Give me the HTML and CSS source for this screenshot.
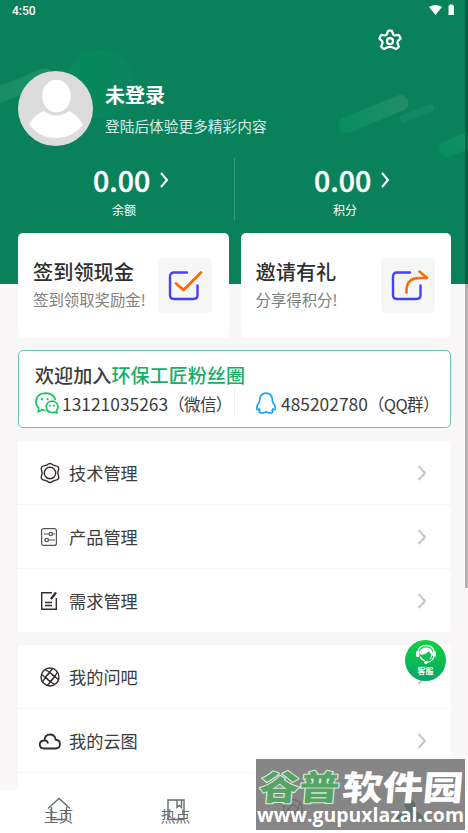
FILE: index.html
```html
<!DOCTYPE html>
<html lang="zh-CN">
<head>
<meta charset="utf-8">
<title>我的</title>
<link rel="stylesheet" href="styles.css">
</head>
<body>
<div class="screen">
  <main class="content">
    <header class="header">
      <svg class="decor" width="468" height="284" viewBox="0 0 468 284">
        <defs>
          <linearGradient id="g1"><stop offset="0" stop-color="#078f60"/><stop offset="1" stop-color="#238c69"/></linearGradient>
          <linearGradient id="g2"><stop offset="0" stop-color="#068a5b"/><stop offset="1" stop-color="#0a845e"/></linearGradient>
        </defs>
        <circle cx="100" cy="84" r="34" fill="url(#g2)"/>
        <rect x="-58" y="-8" width="116" height="16" rx="8" transform="translate(-1 95) rotate(-22)" fill="url(#g1)"/>
        <rect x="-37" y="-8" width="74" height="16" rx="8" transform="translate(373.500 114) rotate(-22)" fill="url(#g1)"/>
        <rect x="-18" y="-4" width="36" height="8" rx="4" transform="translate(417 113.500) rotate(-22)" fill="#128963"/>
        <rect x="-37" y="-8" width="74" height="16" rx="8" transform="translate(474 138) rotate(-22)" fill="url(#g1)"/>
      </svg>
      <div class="status">
        <span>4:50</span>
        <svg width="28" height="13" viewBox="0 0 28 13" fill="#fff"><path d="M0 3Q6.500-1.200 13 3L6.500 11Z"/><path d="M19.500 1.500h1.200V.5h3v1h1.200v9.500h-5.400z"/></svg>
      </div>
      <div class="settings">
        <svg width="26" height="26" viewBox="0 0 26 26" fill="none" stroke="#fff" stroke-width="2.200" stroke-linejoin="round"><path d="M11 2.900q2-.6 4 0l1.200 3.700 1.600.9 3.900-.6q1.500 1.600 1.900 3.500l-2.900 2.900-.3 1.700 1.500 3.700q-1.300 1.700-3 2.300L15.300 19.300q-2.300-1-4.600 0L7.100 21q-1.700-.6-3-2.300L5.600 15l-.3-1.700-2.900-2.900q.4-1.900 1.900-3.500l3.900.6 1.600-.9z"/><circle cx="13" cy="13.200" r="3"/></svg>
      </div>
      <div class="profile">
        <svg width="75" height="75" viewBox="0 0 75 75"><circle cx="37.500" cy="37.500" r="37.500" fill="#dcdcdc"/><ellipse cx="38.500" cy="25" rx="14.300" ry="16.200" fill="#fff"/><path d="M26 40Q38 49 51 40Q60 44 65 54Q54 67 38 67Q21 67 11 53Q17 43 26 40Z" fill="#fff"/></svg>
        <div class="who"><div class="name">未登录</div><div class="hint">登陆后体验更多精彩内容</div></div>
      </div>
      <div class="stats">
        <div class="stat"><div class="num">0.00<svg width="9" height="16" viewBox="0 0 9 16"><path d="M1.500 1.500L7 8l-5.500 6.500" fill="none" stroke="#fff" stroke-width="2" stroke-linecap="round"/></svg></div><div class="label">余额</div></div>
        <div class="stat"><div class="num">0.00<svg width="9" height="16" viewBox="0 0 9 16"><path d="M1.500 1.500L7 8l-5.500 6.500" fill="none" stroke="#fff" stroke-width="2" stroke-linecap="round"/></svg></div><div class="label">积分</div></div>
      </div>
    </header>

    <section class="promos">
      <div class="promo"><div><div class="title">签到领现金</div><div class="desc">签到领取奖励金!</div></div>
        <div class="tile"><svg width="54" height="54" viewBox="0 0 54 54" fill="none" stroke-linecap="round" stroke-linejoin="round"><path d="M29 14.500H16q-4 0-4 4V37q0 4 4 4h19.500q4 0 4-4V27.500" stroke="#4540ff" stroke-width="2.400"/><path d="M18 25.500l7.500 6.500L43 14.500" stroke="#ff6a00" stroke-width="2.700"/></svg></div></div>
      <div class="promo"><div><div class="title">邀请有礼</div><div class="desc">分享得积分!</div></div>
        <div class="tile"><svg width="54" height="54" viewBox="0 0 54 54" fill="none" stroke-linecap="round" stroke-linejoin="round"><path d="M29 14.500H16q-4 0-4 4V37q0 4 4 4h19.500q4 0 4-4V27.500" stroke="#4540ff" stroke-width="2.400"/><path d="M25.500 34.500v-2q0-12.500 13-12.500H46l-7.500-6.500" stroke="#ff6a00" stroke-width="2.500"/></svg></div></div>
    </section>

    <section class="fans">
      <div class="join">欢迎加入<span>环保工匠粉丝圈</span></div>
      <div class="contacts">
        <div class="contact wechat">
          <svg width="24" height="22" viewBox="0 0 24 22" fill="none" stroke="#1cc45a" stroke-width="1.700"><path d="M10.500 18.300q-2 0-3.500-.6L3.300 19.800l.4-3.800Q.9 13.500.9 9.600 1.500 1.500 10.500 1.100q8.500.3 9.800 7"/><path d="M21.900 20.900l-.4-2.500q1.700-1.800 1.500-4Q22 9.200 17 9q-5.600.5-5.800 5.800.5 5.300 6 5.700 1.200 0 2.200-.4z"/><path d="M7 6.200v2M12.500 6.200v2M14.800 12.800v1.700M19 12.800v1.700" stroke-width="1.900"/></svg>
          <span>13121035263<span class="note">（微信）</span></span>
        </div>
        <div class="contact qq">
          <svg width="20" height="22" viewBox="0 0 20 22" fill="none" stroke="#20a5ee" stroke-width="1.700" stroke-linejoin="round"><path d="M3.600 8.500Q4 1.200 10 1.200t6.400 7.300q0 1.500.8 2.500 2.400 3 2 6-.8 1.600-2.400-.2l-.8 1.700q1.500 1.300.2 2.100-3.200.8-6.200-.8-3 1.600-6.200.8-1.300-.8.200-2.100l-.8-1.700q-1.600 1.800-2.400.2-.4-3 2-6 .8-1 .8-2.500z"/></svg>
          <span>485202780<span class="note">（QQ群）</span></span>
        </div>
      </div>
    </section>

    <section class="list">
      <div class="row"><svg class="ico" width="22" height="22" viewBox="0 0 22 22"><path d="M8.300 2.800Q11 .2 13.700 2.800l3.300 1.100q3.300.5 2.600 3.800L18.800 11l.8 3.300q.7 3.300-2.600 3.800l-3.300 1.100q-2.700 2.600-5.400 0L5 18.100q-3.300-.5-2.600-3.800L3.200 11l-.8-3.300Q1.700 4.400 5 3.900z"/><circle cx="11" cy="11" r="5.700"/></svg><span>技术管理</span><svg class="arrow" width="10" height="16" viewBox="0 0 10 16"><path d="M1.500 1L8 8l-6.500 7"/></svg></div>
      <div class="row"><svg class="ico thin" width="22" height="22" viewBox="0 0 22 22"><rect x="2.600" y="2.600" width="14.800" height="16.800" rx="2"/><path d="M5 8h5m3.500 0H16M5 14h1m3.500 0H16"/><circle cx="11.800" cy="8" r="1.700"/><circle cx="7.800" cy="14" r="1.700"/></svg><span>产品管理</span><svg class="arrow" width="10" height="16" viewBox="0 0 10 16"><path d="M1.500 1L8 8l-6.500 7"/></svg></div>
      <div class="row"><svg class="ico" width="22" height="22" viewBox="0 0 22 22"><path d="M13 2.800H2.700v16.500h14.600V8M6 12.500h7M6 15.500h7"/><path d="M12 9l5-6.500" stroke-width="2.300"/></svg><span>需求管理</span><svg class="arrow" width="10" height="16" viewBox="0 0 10 16"><path d="M1.500 1L8 8l-6.500 7"/></svg></div>
    </section>

    <section class="list">
      <div class="row"><svg class="ico" width="22" height="22" viewBox="0 0 22 22"><circle cx="11" cy="11" r="9"/><path d="M11 6.500l4.500 4.500-4.500 4.500L6.500 11zM11 6.500L6 3.500M15.500 11l3-5M11 15.500l5 3M6.500 11l-3 5M6.500 11l7-8.300M11 6.500l8.300 7M15.500 11l-7 8.300M11 15.500L2.700 8.500"/></svg><span>我的问吧</span><svg class="arrow" width="10" height="16" viewBox="0 0 10 16"><path d="M1.500 1L8 8l-6.500 7"/></svg></div>
      <div class="row"><svg class="ico cloud" width="22" height="22" viewBox="0 0 22 22"><path d="M5 18.500q-4.200-.2-4.200-4 0-3.700 4.500-4Q6 4.500 11 4.500q5 0 5.500 5 4.500.7 4.500 4.500 0 4.500-4.500 4.500zM5.300 10.500q3.200-.4 3.700 3"/></svg><span>我的云图</span><svg class="arrow" width="10" height="16" viewBox="0 0 10 16"><path d="M1.500 1L8 8l-6.500 7"/></svg></div>
      <div class="row"></div>
    </section>
  </main>

  <nav class="tabs">
    <div class="tab"><svg width="26" height="26" viewBox="0 0 26 26"><path d="M2 12.500L13 2.500l11 10M5.500 11v12.500h15V11"/></svg><span>主页</span></div>
    <div class="tab"><svg width="26" height="26" viewBox="0 0 26 26"><path d="M5 4h16v19.500H5zM14 4v7.500l2.200-2 2.300 2V4"/></svg><span>热点</span></div>
    <div class="tab"><svg width="26" height="26" viewBox="0 0 26 26"><circle cx="13" cy="13" r="9.500"/><path d="M13 8l5 5-5 5-5-5zM13 8L7 6M18 13l2-7M13 18l6 2M8 13l-2 7"/></svg></div>
    <div class="tab active"><svg width="30" height="26" viewBox="0 0 30 26"><circle cx="15" cy="9" r="5.500"/><path d="M1 24q1-8 14-11 13 3 14 11z"/></svg></div>
  </nav>

  <div class="service">
    <svg width="22" height="21" viewBox="0 0 22 21"><path d="M3 8Q4 1.500 11 1.500T19 8" fill="none" stroke="#fff" stroke-width="1.300"/><path d="M4.500 9Q5 3.500 11 3.500t6.500 5q.5 5.500-3.500 7.500 2.500-3 1.700-7l-2.200-1.500Q10 11.500 5.500 10.500z" fill="#fff"/><rect x="1" y="7" width="3.500" height="6" rx="1.500" fill="#fff"/><rect x="17.500" y="7" width="3.500" height="6" rx="1.500" fill="#fff"/><path d="M5 12.500q1.500 3.500 5 4M19 12q-1 6-8 6.500" fill="none" stroke="#fff" stroke-width="1.300"/><circle cx="11" cy="18.500" r="1.800" fill="#fff"/></svg>
    <span>客服</span>
  </div>

  <svg class="watermark" width="209" height="71" viewBox="0 0 209 71">
    <rect width="209" height="71" fill="#6d6d6d" fill-opacity=".83"/>
    <g class="brand" transform="skewX(-5)">
      <text class="brand-green" x="6" y="41" textLength="80" lengthAdjust="spacingAndGlyphs">谷普</text>
      <text class="brand-white" x="89" y="41" textLength="121" lengthAdjust="spacingAndGlyphs">软件园</text>
    </g>
    <text class="site" x="1" y="63" textLength="207" lengthAdjust="spacingAndGlyphs">www.gupuxlazal.com</text>
  </svg>
  <div class="scrollbar"></div>
</div>
</body>
</html>
```
FILE: styles.css
```css
* { box-sizing: border-box; }
body { margin: 0; font-family: "Noto Sans CJK SC", sans-serif; color: #3c3c3c; }
svg { display: block; flex: none; }
.screen { position: relative; width: 468px; height: 833px; overflow: hidden; background: #f8f6f7; display: flex; flex-direction: column; }
.content { height: 790px; overflow: hidden; flex: none; }
.header { position: relative; height: 284px; background: #09825b; color: #fff; }
.decor { position: absolute; inset: 0; }
.status, .settings, .profile, .stats { position: relative; }
.status { height: 20px; padding: 4px 11px 0 12px; display: flex; justify-content: space-between; font: 500 12px/14px Roboto, sans-serif; }
.settings { height: 51px; padding: 8px 0 0 377px; }
.profile { display: flex; padding-left: 18px; height: 75px; }
.who { margin-left: 12px; padding-top: 10px; }
.name { font-size: 20px; line-height: 28px; font-weight: 700; }
.hint { font-size: 14.700px; line-height: 20px; margin-top: 7px; color: #d8ece5; }
.stats { display: flex; margin-top: 12px; height: 62px; }
.stat { width: 234px; flex: none; display: flex; flex-direction: column; padding-left: 93px; }
.stat + .stat { border-left: 1px solid #3a9b7c; padding-left: 79px; }
.num { display: flex; align-items: center; font-size: 28.500px; font-weight: 500; -webkit-text-stroke: .4px #fff; line-height: 44px; height: 44px; }
.num svg { margin-left: 10px; }
.label { font-size: 12px; line-height: 16px; margin-left: 19px; }
.promos { position: relative; display: flex; gap: 12px; padding: 0 17px 0 18px; margin-top: -51px; }
.promo { flex: 1; height: 105px; background: #fff; border-radius: 5px; display: flex; justify-content: space-between; padding: 25px 16.500px 0 15px; }
.title { font-size: 20.200px; line-height: 28px; font-weight: 500; white-space: nowrap; color: #2e2e2e; }
.desc { font-size: 15.400px; line-height: 20px; margin-top: 3px; color: #808080; white-space: nowrap; }
.tile { width: 54px; height: 55px; flex: none; background: #f6f6f6; border-radius: 5px; }
.fans { margin: 12px 17px 13px 18px; height: 78px; border: 1px solid #68c9a0; border-radius: 5px; background: #fff; padding: 11px 0 0 16px; }
.join { font-size: 19.100px; line-height: 26px; font-weight: 500; }
.join span { color: #15ae67; }
.contacts { display: flex; margin-top: 1px; }
.contact { height: 28px; display: flex; align-items: center; gap: 3px; font-size: 17.400px; white-space: nowrap; }
.note { font-size: 16.500px; letter-spacing: -.6px; }
.wechat { width: 200px; border-right: 1px solid #eee; margin-right: 21px; }
.qq { gap: 5px; }
.list { margin: 0 17px 13px 18px; background: #fff; height: 191px; }
.row { height: 64px; display: flex; align-items: center; padding: 0 24px 0 21px; font-size: 17.200px; border-bottom: 1px solid #f6f6f6; }
.row span { margin-left: 8px; flex: 1; }
.ico { fill: none; stroke: #352d2d; stroke-width: 1.400; }
.thin { stroke: #555; stroke-width: 1.200; }
.cloud { stroke-width: 1.800; }
.arrow { fill: none; stroke: #c4c4c4; stroke-width: 1.900; }
.tabs { height: 43px; background: #fff; display: flex; flex: none; }
.tab { flex: 1; display: flex; flex-direction: column; align-items: center; padding-top: 6px; color: #666b70; font-size: 14.700px; line-height: 20px; }
.tab span { margin-top: -16px; }
.tab svg { fill: none; stroke: #666b70; stroke-width: 1.400; }
.tab.active svg { fill: #09825b; stroke: none; }
.service { position: absolute; left: 405px; top: 640px; width: 41px; height: 41px; border-radius: 50%; background: linear-gradient(#0bd33d, #07a568); display: flex; flex-direction: column; align-items: center; padding-top: 4px; color: #fff; font-size: 8px; font-weight: 700; line-height: 12px; }
.watermark { position: absolute; left: 256px; top: 759px; }
.brand text { font: 900 34px "Noto Sans CJK SC", sans-serif; paint-order: stroke; stroke-linejoin: round; }
.brand-green { fill: #55a365; stroke: #e2eee4; stroke-width: 2px; }
.brand-white { fill: #fff; }
.site { font: 700 19px "Open Sans", sans-serif; fill: #fff; }
.scrollbar { position: absolute; right: 0; top: 0; width: 3px; height: 588px; background: rgba(0, 0, 0, .28); }
```
